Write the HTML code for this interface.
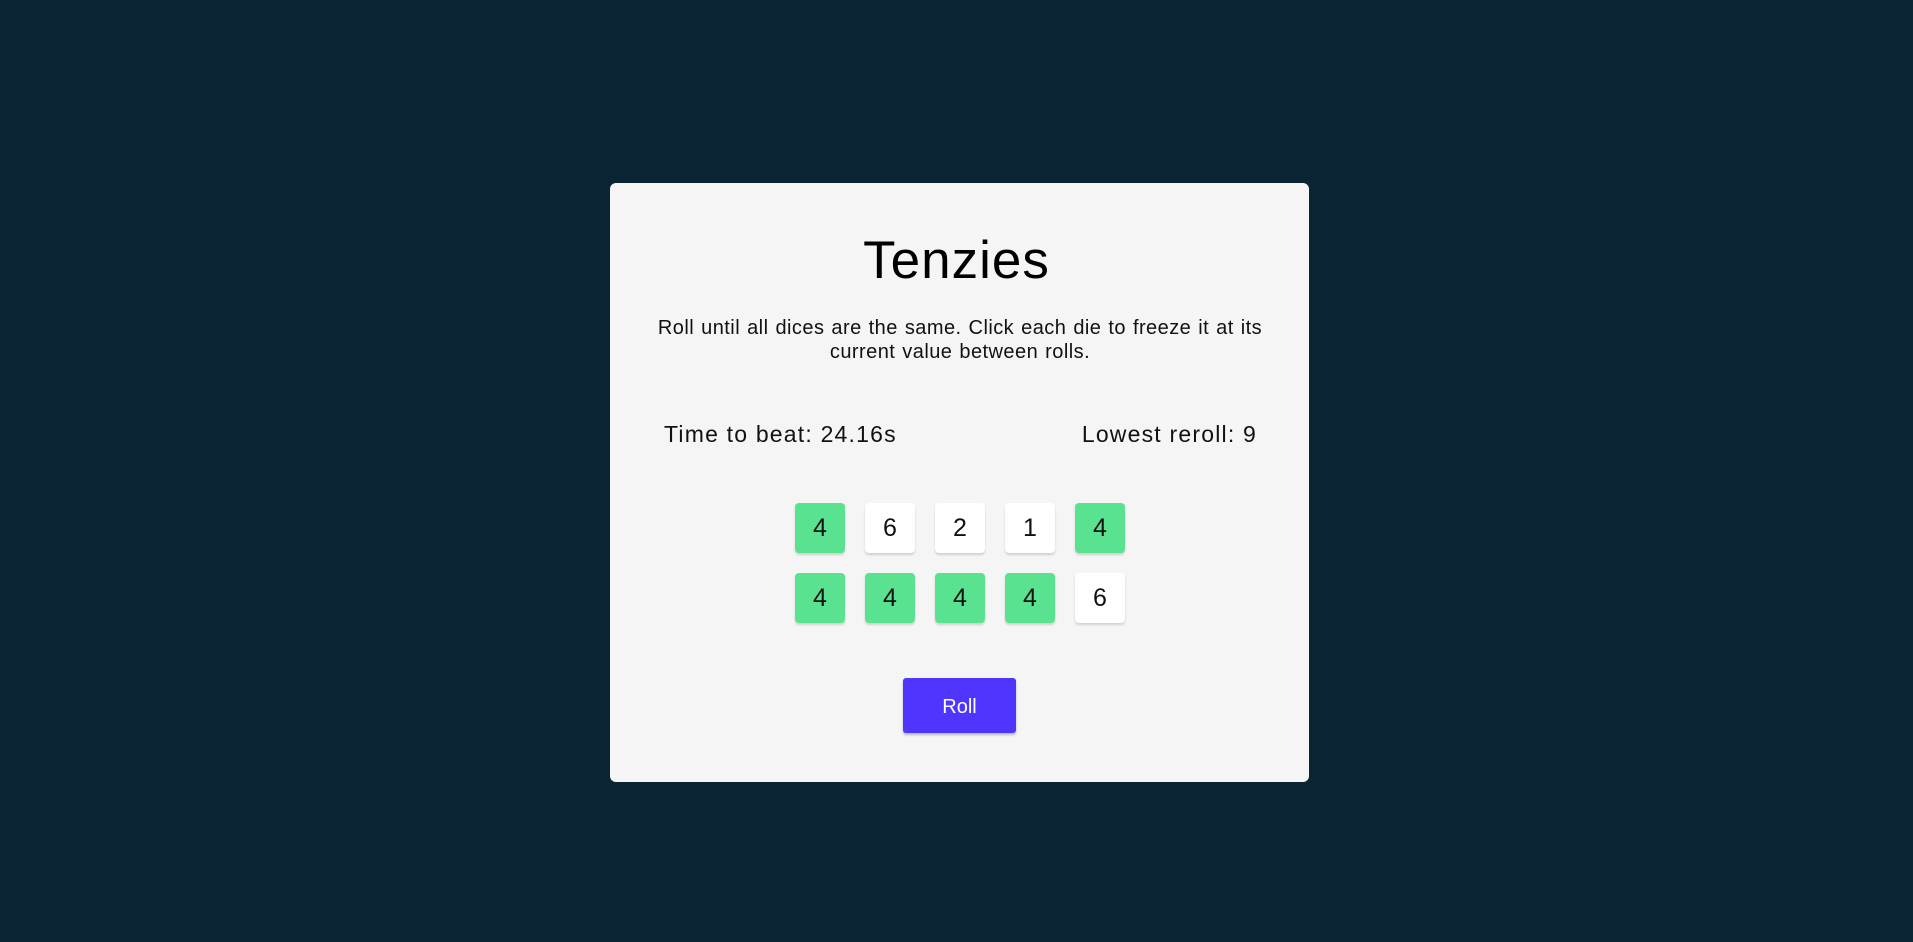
<!DOCTYPE html>
<html><head><style>
body{margin:0;width:1913px;height:942px;background:#0B2434;font-family:"Liberation Sans",sans-serif;position:relative;overflow:hidden}
.card{position:absolute;left:610px;top:183px;width:699px;height:599px;background:#F5F5F5;border-radius:6px}
h1{position:absolute;left:0;width:100%;top:226px;margin:0;text-align:center;font-weight:300;font-size:53px;line-height:70px;color:#000;letter-spacing:1px}
.abs{position:absolute}
.desc{left:620px;width:680px;top:316px;text-align:center;font-size:20px;line-height:24px;color:#111;letter-spacing:0.45px;word-spacing:1px}
.stat{top:420px;font-size:23px;line-height:28px;color:#111;letter-spacing:1.2px}
.die{position:absolute;width:50px;height:50px;background:#fff;border-radius:4px;box-shadow:0 2px 2px rgba(0,0,0,.15);text-align:center;line-height:50px;font-size:25px;color:#111}
.g{background:#59E391}
.btn{position:absolute;left:903px;top:678px;width:113px;height:55px;background:#5035FF;border-radius:3px;box-shadow:0 2px 2px rgba(0,0,0,.25);color:#fff;text-align:center;line-height:58px;font-size:20px}
</style></head><body>
<div class="card"></div>
<h1>Tenzies</h1>
<div class="abs desc">Roll until all dices are the same. Click each die to freeze it at its<br>current value between rolls.</div>
<div class="abs stat" style="left:664px">Time to beat: 24.16s</div>
<div class="abs stat" style="right:656px">Lowest reroll: 9</div>
<div class="die g" style="left:795px;top:503px">4</div>
<div class="die" style="left:865px;top:503px">6</div>
<div class="die" style="left:935px;top:503px">2</div>
<div class="die" style="left:1005px;top:503px">1</div>
<div class="die g" style="left:1075px;top:503px">4</div>
<div class="die g" style="left:795px;top:573px">4</div>
<div class="die g" style="left:865px;top:573px">4</div>
<div class="die g" style="left:935px;top:573px">4</div>
<div class="die g" style="left:1005px;top:573px">4</div>
<div class="die" style="left:1075px;top:573px">6</div>
<div class="btn">Roll</div>
</body></html>
